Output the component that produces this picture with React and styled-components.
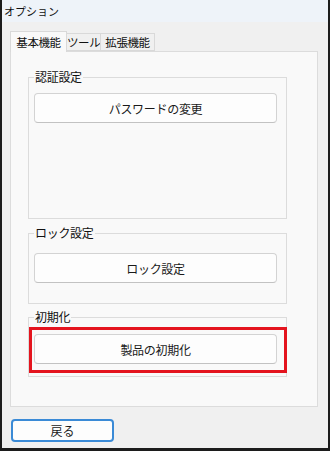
import React from 'react';
import styled, { createGlobalStyle } from 'styled-components';

const Global = createGlobalStyle`
  html, body { margin: 0; padding: 0; background: #f0f0f0; }
  * { box-sizing: border-box; }
  body { font-family: "Noto Sans CJK JP", "Noto Sans", sans-serif; }
`;

const Window = styled.div`
  width: 330px;
  height: 451px;
  display: flex;
  flex-direction: column;
  background: #f0f0f0;
  border-left: 2px solid #1c1c1c;
  border-right: 2px solid #1c1c1c;
  border-bottom: 3px solid #1c1c1c;
`;

const TitleBar = styled.div`
  height: 22px;
  flex: none;
  background: #eef3f9;
  padding-left: 2px;
  font-size: 11px;
  line-height: 22px;
  color: #111;
`;

const Body = styled.div`
  flex: 1;
  display: flex;
  flex-direction: column;
  padding: 9px 10px 8px 8px;
`;

const TabRow = styled.div`
  display: flex;
  align-items: flex-end;
  height: 20px;
  position: relative;
  z-index: 1;
`;

const Tab = styled.div`
  width: ${p => p.$w}px;
  height: ${p => (p.$active ? '21px' : '18px')};
  text-align: center;
  font-size: 11.5px;
  letter-spacing: -0.4px;
  white-space: nowrap;
  line-height: ${p => (p.$active ? '20px' : '17px')};
  color: #111;
  background: ${p => (p.$active ? '#f9f9f9' : '#f0f0f0')};
  border: 1px solid #d9d9d9;
  border-bottom: ${p => (p.$active ? 'none' : '1px solid #d9d9d9')};
  margin-left: ${p => (p.$active ? '0' : '-1px')};
  margin-bottom: ${p => (p.$active ? '-1px' : '0')};
`;

const Panel = styled.div`
  height: 356px;
  flex: none;
  background: #f9f9f9;
  border: 1px solid #dcdcdc;
  padding: 17px 30px 0 17px;
  display: flex;
  flex-direction: column;
`;

const Group = styled.fieldset`
  margin: ${p => p.$gap}px 0 0 0;
  padding: 0 9px 0 5px;
  min-width: 0;
  height: ${p => p.$h}px;
  border: 1px solid #dcdcdc;
  border-radius: 0;
`;

const Legend = styled.legend`
  padding: 0 1px;
  font-size: 12px;
  line-height: 16px;
  letter-spacing: -0.3px;
  color: #111;
`;

const Button = styled.button`
  display: block;
  width: 100%;
  height: 30px;
  margin-top: ${p => p.$top || 0}px;
  background: #fdfdfd;
  border: 1px solid #d3d3d3;
  border-bottom-color: #c2c2c2;
  border-radius: 4px;
  font-family: "Noto Sans CJK JP", "Noto Sans", sans-serif;
  font-size: 12px;
  letter-spacing: -0.3px;
  color: #1a1a1a;
  padding: 0;
`;

const Highlight = styled.div`
  margin: 2px -10px 0 -5px;
  padding: 4px 7px 6px 2px;
  border: 3px solid #e4141e;
`;

const Footer = styled.div`
  padding-top: 10px;
  padding-left: 1px;
`;

const BackButton = styled.button`
  width: 103px;
  height: 23px;
  background: #fdfdfd;
  border: 2px solid #3a8ad6;
  border-radius: 4px;
  font-family: "Noto Sans CJK JP", "Noto Sans", sans-serif;
  font-size: 12px;
  color: #1a1a1a;
  padding: 0;
`;

export default function App() {
  return (
    <>
      <Global />
      <Window>
        <TitleBar>オプション</TitleBar>
        <Body>
          <TabRow>
            <Tab $active $w={57}>基本機能</Tab>
            <Tab $w={35}>ツール</Tab>
            <Tab $w={55}>拡張機能</Tab>
          </TabRow>
          <Panel>
            <Group $h={150} $gap={0}>
              <Legend>認証設定</Legend>
              <Button $top={8}>パスワードの変更</Button>
            </Group>
            <Group $h={79} $gap={6}>
              <Legend>ロック設定</Legend>
              <Button $top={12}>ロック設定</Button>
            </Group>
            <Group $h={68} $gap={5}>
              <Legend>初期化</Legend>
              <Highlight>
                <Button>製品の初期化</Button>
              </Highlight>
            </Group>
          </Panel>
          <Footer>
            <BackButton>戻る</BackButton>
          </Footer>
        </Body>
      </Window>
    </>
  );
}
